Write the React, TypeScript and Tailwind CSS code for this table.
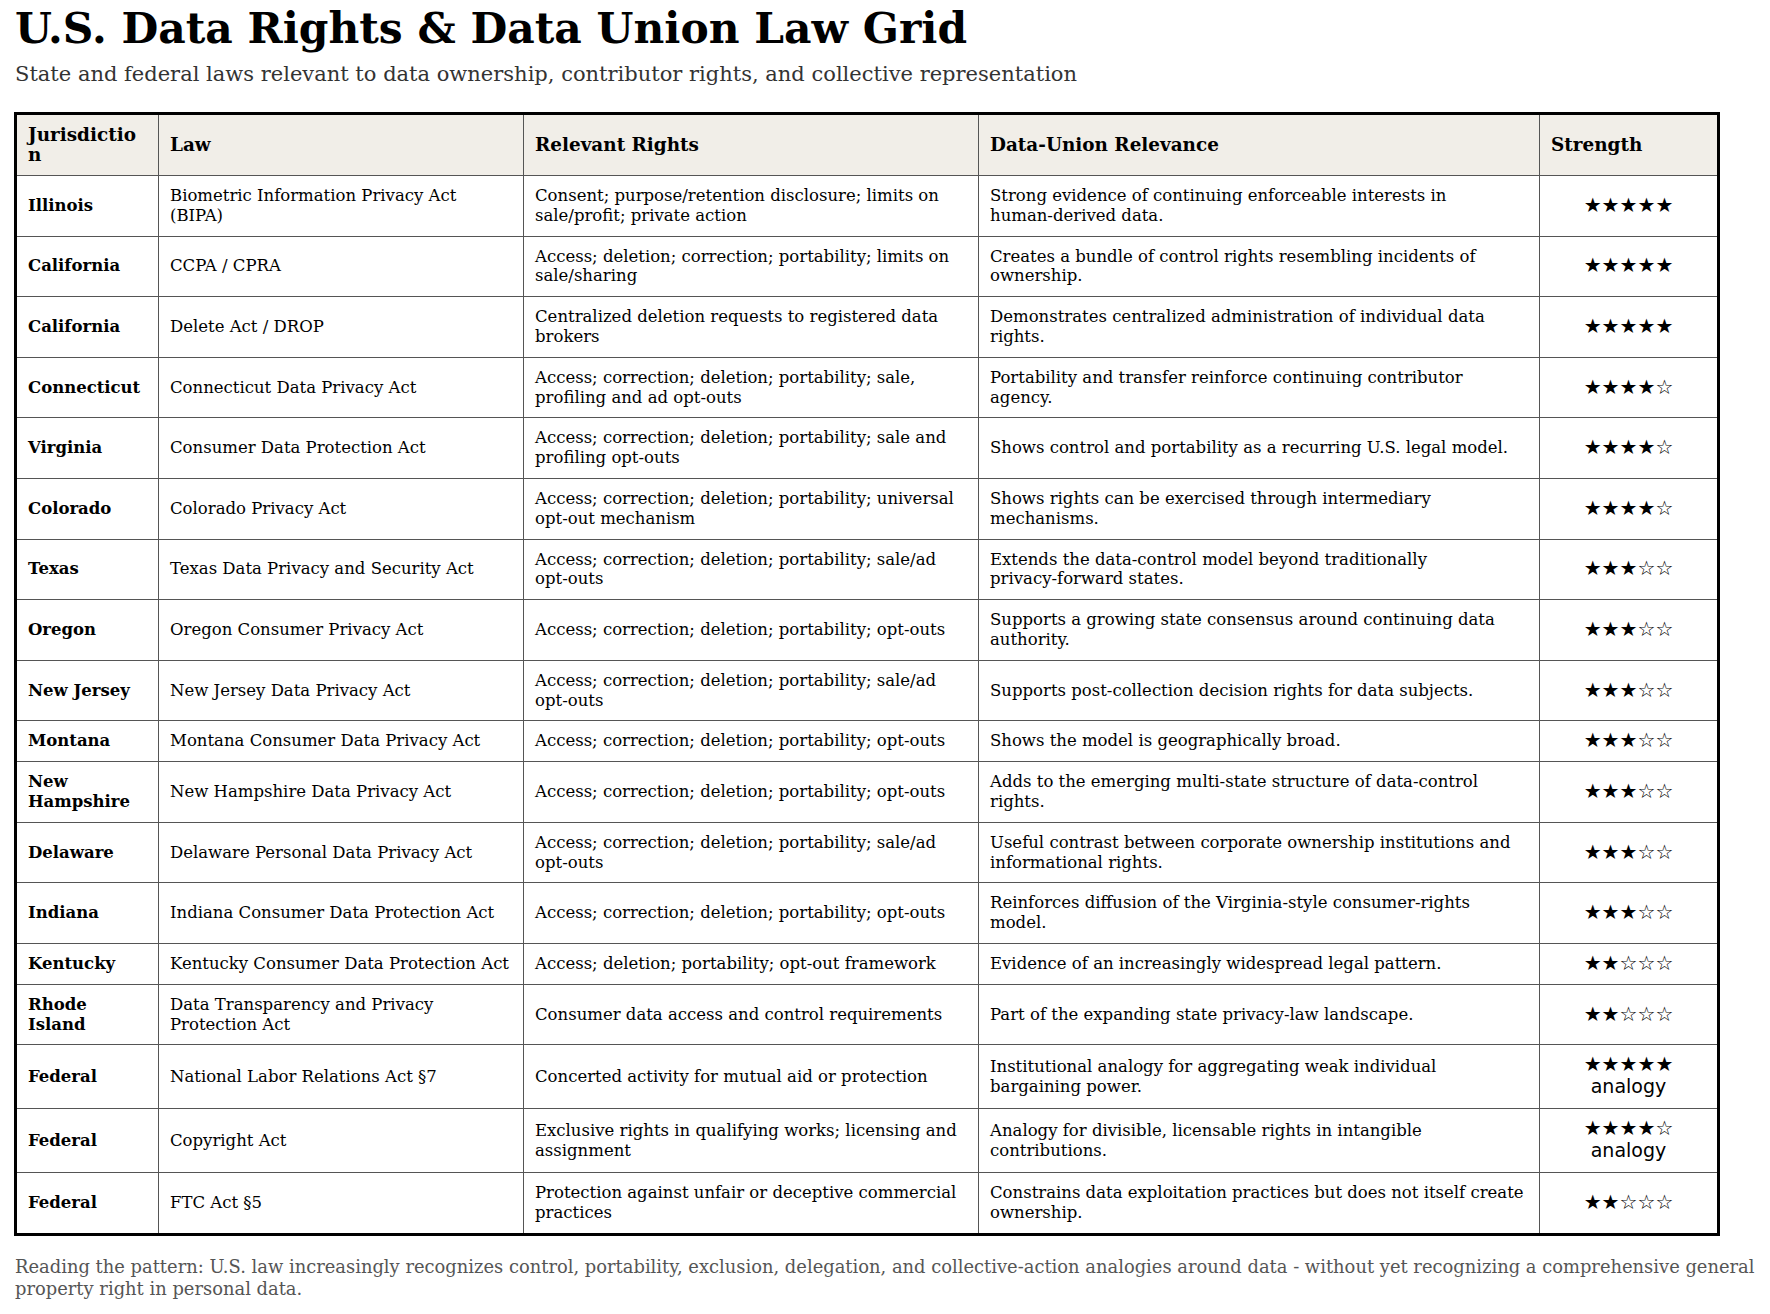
import React from "react";

type Row = {
  j: string;
  law: string;
  rights: string;
  rel: React.ReactNode;
  stars: number;
  analogy?: boolean;
};

const NW = ({ children }: { children: React.ReactNode }) => (
  <span className="whitespace-nowrap">{children}</span>
);

const rows: Row[] = [
  { j: "Illinois", law: "Biometric Information Privacy Act (BIPA)", rights: "Consent; purpose/retention disclosure; limits on sale/profit; private action", rel: <>Strong evidence of continuing enforceable interests in <NW>human-derived</NW> data.</>, stars: 5 },
  { j: "California", law: "CCPA / CPRA", rights: "Access; deletion; correction; portability; limits on sale/sharing", rel: "Creates a bundle of control rights resembling incidents of ownership.", stars: 5 },
  { j: "California", law: "Delete Act / DROP", rights: "Centralized deletion requests to registered data brokers", rel: "Demonstrates centralized administration of individual data rights.", stars: 5 },
  { j: "Connecticut", law: "Connecticut Data Privacy Act", rights: "Access; correction; deletion; portability; sale, profiling and ad opt-outs", rel: "Portability and transfer reinforce continuing contributor agency.", stars: 4 },
  { j: "Virginia", law: "Consumer Data Protection Act", rights: "Access; correction; deletion; portability; sale and profiling opt-outs", rel: "Shows control and portability as a recurring U.S. legal model.", stars: 4 },
  { j: "Colorado", law: "Colorado Privacy Act", rights: "Access; correction; deletion; portability; universal opt-out mechanism", rel: "Shows rights can be exercised through intermediary mechanisms.", stars: 4 },
  { j: "Texas", law: "Texas Data Privacy and Security Act", rights: "Access; correction; deletion; portability; sale/ad opt-outs", rel: <>Extends the data-control model beyond traditionally <NW>privacy-forward</NW> states.</>, stars: 3 },
  { j: "Oregon", law: "Oregon Consumer Privacy Act", rights: "Access; correction; deletion; portability; opt-outs", rel: "Supports a growing state consensus around continuing data authority.", stars: 3 },
  { j: "New Jersey", law: "New Jersey Data Privacy Act", rights: "Access; correction; deletion; portability; sale/ad opt-outs", rel: "Supports post-collection decision rights for data subjects.", stars: 3 },
  { j: "Montana", law: "Montana Consumer Data Privacy Act", rights: "Access; correction; deletion; portability; opt-outs", rel: "Shows the model is geographically broad.", stars: 3 },
  { j: "New Hampshire", law: "New Hampshire Data Privacy Act", rights: "Access; correction; deletion; portability; opt-outs", rel: "Adds to the emerging multi-state structure of data-control rights.", stars: 3 },
  { j: "Delaware", law: "Delaware Personal Data Privacy Act", rights: "Access; correction; deletion; portability; sale/ad opt-outs", rel: "Useful contrast between corporate ownership institutions and informational rights.", stars: 3 },
  { j: "Indiana", law: "Indiana Consumer Data Protection Act", rights: "Access; correction; deletion; portability; opt-outs", rel: "Reinforces diffusion of the Virginia-style consumer-rights model.", stars: 3 },
  { j: "Kentucky", law: "Kentucky Consumer Data Protection Act", rights: "Access; deletion; portability; opt-out framework", rel: "Evidence of an increasingly widespread legal pattern.", stars: 2 },
  { j: "Rhode Island", law: "Data Transparency and Privacy Protection Act", rights: "Consumer data access and control requirements", rel: "Part of the expanding state privacy-law landscape.", stars: 2 },
  { j: "Federal", law: "National Labor Relations Act §7", rights: "Concerted activity for mutual aid or protection", rel: "Institutional analogy for aggregating weak individual bargaining power.", stars: 5, analogy: true },
  { j: "Federal", law: "Copyright Act", rights: "Exclusive rights in qualifying works; licensing and assignment", rel: "Analogy for divisible, licensable rights in intangible contributions.", stars: 4, analogy: true },
  { j: "Federal", law: "FTC Act §5", rights: "Protection against unfair or deceptive commercial practices", rel: "Constrains data exploitation practices but does not itself create ownership.", stars: 2 },
];

const starStr = (n: number) => "★".repeat(n) + "☆".repeat(5 - n);

export default function App() {
  return (
    <div className="min-h-[1314px] bg-white pl-[14px] pr-[8px] pt-[7px] text-black [font-family:'DejaVu_Serif',serif]">
      <h1 className="pl-[1px] text-[42.4px] font-bold leading-[42px]">U.S. Data Rights &amp; Data Union Law Grid</h1>
      <p className="mt-[12px] pl-[1px] text-[21px] leading-[26px] text-[#333]">
        State and federal laws relevant to data ownership, contributor rights, and collective representation
      </p>
      <table className="mt-[25px] w-[1703px] table-fixed border-collapse border-[3px] border-black text-[16.5px] leading-[19.8px]">
        <colgroup>
          <col className="w-[143px]" />
          <col className="w-[365px]" />
          <col className="w-[455px]" />
          <col className="w-[561px]" />
          <col className="w-[179px]" />
        </colgroup>
        <thead>
          <tr className="bg-[#f1eee8]">
            {["Jurisdiction", "Law", "Relevant Rights", "Data-Union Relevance", "Strength"].map((h) => (
              <th
                key={h}
                className="break-all border border-[#555] px-[11px] py-[10px] text-left align-middle text-[18.4px] font-bold leading-[20px]"
              >
                {h}
              </th>
            ))}
          </tr>
        </thead>
        <tbody>
          {rows.map((r, i) => (
            <tr key={i}>
              <td className="border border-[#555] px-[11px] py-[10px] align-middle font-bold">{r.j}</td>
              <td className="border border-[#555] px-[11px] py-[10px] align-middle">{r.law}</td>
              <td className="border border-[#555] px-[11px] py-[10px] align-middle">{r.rights}</td>
              <td className="border border-[#555] px-[11px] py-[10px] align-middle">{r.rel}</td>
              <td className="border border-[#555] px-[11px] py-[10px] text-center align-middle [font-family:'DejaVu_Sans',sans-serif]">
                <div className="text-[20px] leading-[19.8px]">{starStr(r.stars)}</div>
                {r.analogy && <div className="text-[19px] leading-[23px]">analogy</div>}
              </td>
            </tr>
          ))}
        </tbody>
      </table>
      <p className="mt-[20px] pl-[1px] text-[17.9px] leading-[22px] text-[#555]">
        Reading the pattern: U.S. law increasingly recognizes control, portability, exclusion, delegation, and collective-action analogies around data - without yet recognizing a comprehensive general property right in personal data.
      </p>
    </div>
  );
}
